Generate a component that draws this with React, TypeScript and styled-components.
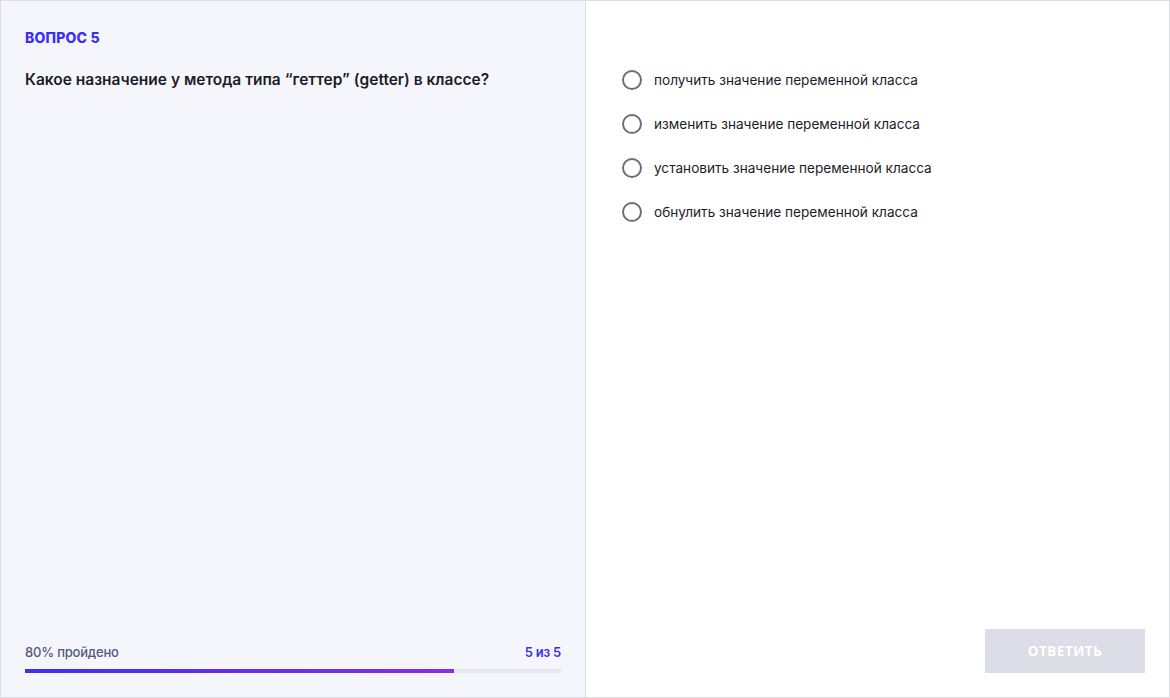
import React from 'react'
import styled, { createGlobalStyle } from 'styled-components'

const Global = createGlobalStyle`
  html, body { margin: 0; padding: 0; background: #fff; }
  body { font-family: Inter, 'Liberation Sans', Arial, sans-serif; }
  * { box-sizing: border-box; }
`

const Frame = styled.div`
  width: 1170px;
  height: 698px;
  border: 1px solid #dcdde6;
  display: grid;
  grid-template-columns: 585px 1fr;
`

const Left = styled.div`
  background: #f5f6fb;
  border-right: 1px solid #dcdde6;
  padding: 28px 24px 24px 24px;
  display: flex;
  flex-direction: column;
`

const Label = styled.div`
  font-size: 14px;
  font-weight: 800;
  color: #3b2ef5;
  letter-spacing: 0.2px;
`

const Question = styled.div`
  margin-top: 24px;
  font-size: 15.5px;
  font-weight: 600;
  color: #1c1c28;
`

const Footer = styled.div`
  margin-top: auto;
`

const FooterRow = styled.div`
  display: flex;
  justify-content: space-between;
  font-size: 13px;
  font-weight: 500;
  letter-spacing: -0.2px;
  padding-top: 1px;
`

const Passed = styled.span`
  color: #545b7a;
`

const Count = styled.span`
  color: #3b2ef5;
  font-weight: 600;
`

const Track = styled.div`
  margin-top: 9px;
  height: 4px;
  background: #e6e6ef;
`

const Fill = styled.div`
  height: 100%;
  background: linear-gradient(90deg, #3a30f2, #8a2ce8);
`

const Right = styled.div`
  padding: 69px 24px 24px 36px;
  display: flex;
  flex-direction: column;
`

const Options = styled.div`
  display: flex;
  flex-direction: column;
  gap: 24px;
`

const Option = styled.label`
  display: flex;
  align-items: center;
  gap: 12px;
  font-size: 13.6px;
  color: #1c1c28;
  height: 20px;
  cursor: pointer;
`

const Radio = styled.span`
  width: 20px;
  height: 20px;
  border-radius: 50%;
  border: 2px solid #6e6e72;
  flex-shrink: 0;
`

const ButtonRow = styled.div`
  margin-top: auto;
  display: flex;
  justify-content: flex-end;
`

const Submit = styled.button`
  width: 160px;
  height: 44px;
  border: none;
  background: #dcdde7;
  color: #fff;
  font-family: 'Open Sans', 'Liberation Sans', sans-serif;
  font-size: 13.5px;
  font-weight: 700;
  letter-spacing: 0.5px;
  text-transform: uppercase;
`

const options = [
  'получить значение переменной класса',
  'изменить значение переменной класса',
  'установить значение переменной класса',
  'обнулить значение переменной класса',
]

export default function App() {
  const progress = 80
  return (
    <>
      <Global />
      <Frame>
        <Left>
          <Label>ВОПРОС 5</Label>
          <Question>Какое назначение у метода типа “геттер” (getter) в классе?</Question>
          <Footer>
            <FooterRow>
              <Passed>{progress}% пройдено</Passed>
              <Count>5 из 5</Count>
            </FooterRow>
            <Track>
              <Fill style={{ width: `${progress}%` }} />
            </Track>
          </Footer>
        </Left>
        <Right>
          <Options>
            {options.map((o) => (
              <Option key={o}>
                <Radio />
                {o}
              </Option>
            ))}
          </Options>
          <ButtonRow>
            <Submit disabled>Ответить</Submit>
          </ButtonRow>
        </Right>
      </Frame>
    </>
  )
}
